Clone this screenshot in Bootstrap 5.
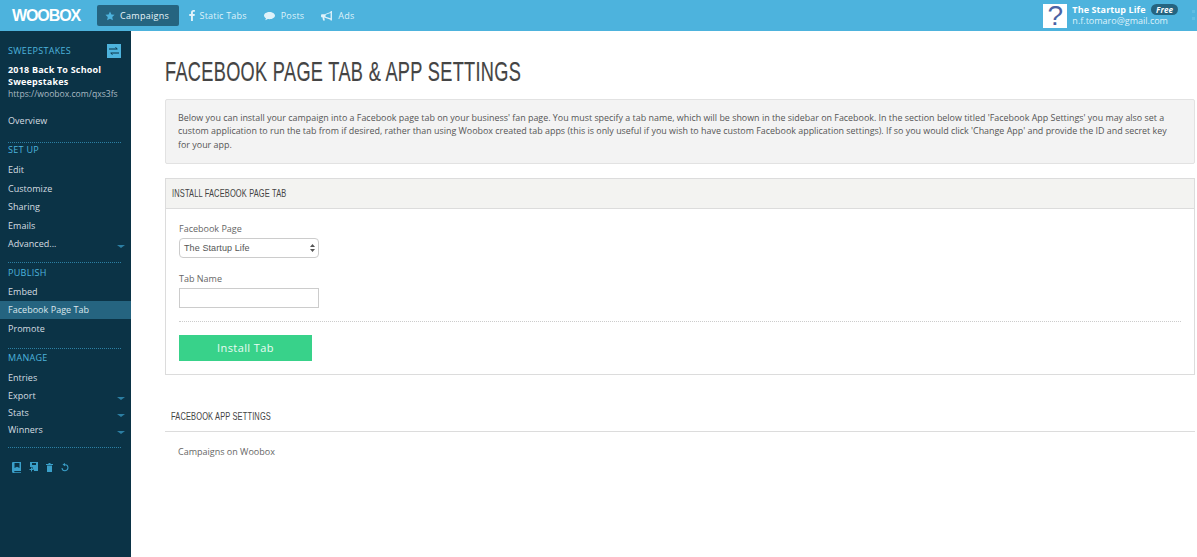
<!DOCTYPE html>
<html lang="en">
<head>
    <meta charset="UTF-8">
    <title>Woobox</title>
    <link href="https://cdn.jsdelivr.net/npm/bootstrap@5.3.3/dist/css/bootstrap.min.css" rel="stylesheet">
    <script src="https://cdn.jsdelivr.net/npm/bootstrap@5.3.3/dist/js/bootstrap.bundle.min.js"></script>
    <style>
        html, body { height: 557px; overflow: hidden; }
        body { font-family: "Open Sans", sans-serif; font-size: 9px; color: #555; background: #fff; }
        .top-bar { height: 31px; background: #4db3dd; padding-left: 12px; position: relative; }
        .logo-text { font-family: "Liberation Sans", sans-serif; font-weight: 700; font-size: 16px; line-height: 16px; letter-spacing: -1.1px; color: #fff; width: 85px; }
        .top-link { height: 21px; padding: 0 8.5px; color: #dff2fa; font-size: 9px; letter-spacing: .2px; border-radius: 2px; gap: 5px; }
        .top-link svg { fill: #dff2fa; }
        .top-link.on { background: #256480; color: #e8f4f9; width: 82px; padding: 0 8px; gap: 5px; letter-spacing: .3px; margin-right: 1px; }
        .top-link.on svg { fill: #4db3dd; }
        .link-gap-wide { gap: 6px; }
        .acct { padding-right: 19px; color: #fff; line-height: 11px; font-size: 9px; }
        .acct-pic { width: 24px; height: 24px; background: #fff; margin-right: 5px; color: #4a63a5; font-size: 28px; line-height: 24px; text-align: center; font-family: "Liberation Sans", sans-serif; }
        .acct-text { padding-bottom: 2px; }
        .acct-name { letter-spacing: .1px; }
        .plan { background: #256480; border-radius: 6px; font-style: italic; font-weight: 700; font-size: 8px; line-height: 9px; padding: 0 5px; margin-left: 3px; }
        .acct-mail { color: #dff2fa; }
        .grip { position: absolute; right: 2px; top: 10px; width: 3px; height: 10px; border-left: 3px dotted #5fbde3; }
        .side { width: 131px; height: 526px; background: #0b3346; color: #d5dde1; padding-top: 13px; flex: none; }
        .side-in { margin: 0 10px 0 8px; }
        .side-head { color: #4db3dd; font-size: 9px; letter-spacing: .3px; line-height: 12px; margin-bottom: 3.5px; }
        .swap-btn { width: 14px; height: 14px; background: #4db3dd; }
        .camp-name { color: #fff; font-weight: 700; line-height: 11.5px; margin-top: 6px; font-size: 9px; letter-spacing: .2px; }
        .camp-url { color: #a9bac3; font-size: 8.6px; line-height: 12px; margin-top: 1px; }
        .side-link { display: flex; align-items: center; justify-content: space-between; height: 18.5px; padding: 0 8px; color: #d5dde1; font-size: 9px; letter-spacing: .03px; }
        .side-link.on { background: #256480; color: #dbe7ec; }
        .side-link.tight { height: 17px; }
        .overview-link { margin-top: 11px; }
        .side-rule { border-top: 1px dotted #2c7fa3; margin: 9px 10px 0 8px; padding-top: 3.5px; }
        .rule-first { margin-top: 12px; padding-top: 1.5px; }
        .rule-first .side-head { margin-bottom: 4.5px; }
        .rule-mid { margin-top: 10px; }
        .rule-mid .side-head { margin-bottom: 4.5px; }
        .rule-last { margin-top: 9px; }
        .side-arrow { width: 0; height: 0; border-left: 4px solid transparent; border-right: 4px solid transparent; border-top: 3px solid #2c7fa3; margin-right: -2px; margin-top: 5px; }
        .tool-row { margin: 10px 0 0 12px; gap: 8px; }
        .tool-row svg { fill: #3a9fc9; }
        .page-body { padding: 22px 2px 0 34px; min-width: 0; }
        .squeeze { display: inline-block; white-space: nowrap; transform: scaleX(.68); transform-origin: left center; font-family: "Liberation Sans", sans-serif; }
        .page-title { font-size: 27.5px; line-height: 36px; color: #444; font-weight: 400; margin: 0 0 9px; }
        .page-title .squeeze { transform: scaleX(.66); letter-spacing: .5px; -webkit-text-stroke: .2px #444; }
        .note-box { background: #f3f3f3; border: 1px solid #e2e2e2; border-radius: 2px; padding: 11px 8px 11px 12px; line-height: 13.3px; height: 65px; font-size: 8.92px; color: #555; margin-bottom: 14px; }
        .set-box { border: 1px solid #dcdcdc; height: 197px; margin-bottom: 33px; }
        .set-head { background: #f3f3f1; border-bottom: 1px solid #dcdcdc; height: 30px; padding: 0 6px; font-size: 11px; color: #444; display: flex; align-items: center; letter-spacing: .2px; }
        .set-body { padding: 14px 13px 0 13px; }
        .fld-label { display: block; font-size: 9px; line-height: 12px; margin-bottom: 3px; color: #666; }
        .fld-select { width: 140px; height: 20px; border: 1px solid #ccc; border-radius: 4px; padding: 0 4px; font-size: 9px; color: #555; font-family: "Liberation Sans", sans-serif; margin-bottom: 15px; line-height: 18px; letter-spacing: .1px; position: relative; }
        .fld-select svg { position: absolute; right: 3px; top: 4px; }
        .fld-input { display: block; width: 140px; height: 20px; border: 1px solid #ccc; padding: 0; background: #fff; }
        .dot-rule { border-top: 1px dotted #ccc; margin: 13px 0; }
        .install-btn { width: 133px; height: 26px; background: #38d28a; color: #eafbf3; border: 0; border-radius: 0; font-size: 11px; padding: 0; letter-spacing: .4px; }
        .app-head { font-size: 11px; color: #444; border-bottom: 1px solid #dcdcdc; height: 24px; padding-left: 6px; letter-spacing: .2px; }
        .app-text { padding: 13px; font-size: 9px; color: #666; }
    </style>
</head>
<body>
    <nav class="top-bar d-flex align-items-center">
        <div class="logo-text">WOOBOX</div>
        <a class="top-link on d-flex align-items-center text-decoration-none">
            <svg width="10" height="10" viewBox="0 0 24 24"><path d="M12 1l3.400 7.200 7.600 1-5.600 5.300 1.500 7.800L12 18.500l-6.900 3.800 1.500-7.800L1 9.200l7.600-1z"/></svg>
            Campaigns
        </a>
        <a class="top-link d-flex align-items-center text-decoration-none">
            <svg width="6" height="11" viewBox="0 0 12 24"><path d="M8 24V13h3.600l.6-4.400H8V6c0-1.300.4-2.100 2.200-2.100h2.100V.2C11.900.1 10.600 0 9.200 0 6 0 3.800 2 3.800 5.500v3.100H0V13h3.800v11z"/></svg>
            Static Tabs
        </a>
        <a class="top-link link-gap-wide d-flex align-items-center text-decoration-none">
            <svg width="11" height="10" viewBox="0 0 24 20"><path d="M12 1C5.400 1 0 4.600 0 9c0 2.500 1.700 4.700 4.400 6.200-.4 1.500-1.300 2.800-2.400 3.800 2.300 0 4.500-.8 6.200-2.200 1.200.2 2.500.3 3.800.3 6.600 0 12-3.600 12-8S18.600 1 12 1z"/></svg>
            Posts
        </a>
        <a class="top-link link-gap-wide d-flex align-items-center text-decoration-none">
            <svg width="11" height="10" viewBox="0 0 24 22"><path d="M21 0v2L8 7H2a2 2 0 0 0-2 2v3a2 2 0 0 0 2 2h1l1.500 7h4L7 14.300 21 19v2h3V0zm0 4.500v11.700L10 12.500V8.200z"/></svg>
            Ads
        </a>
        <div class="acct d-flex align-items-center ms-auto">
            <div class="acct-pic">?</div>
            <div class="acct-text">
                <div class="fw-bold acct-name">The Startup Life <span class="plan">Free</span></div>
                <div class="acct-mail">n.f.tomaro@gmail.com</div>
            </div>
        </div>
        <span class="grip"></span>
    </nav>

    <div class="d-flex">
        <aside class="side">
            <div class="side-in">
                <div class="d-flex justify-content-between align-items-center">
                    <span class="side-head mb-0">SWEEPSTAKES</span>
                    <span class="swap-btn d-flex align-items-center justify-content-center">
                        <svg width="10" height="8" viewBox="0 0 10 8"><path d="M0 2h8M6.500.5L8.500 2M10 6H2M3.500 7.500L1.500 6" stroke="#0b3346" fill="none"/></svg>
                    </span>
                </div>
                <div class="camp-name">2018 Back To School Sweepstakes</div>
                <div class="camp-url">https://woobox.com/qxs3fs</div>
            </div>
            <div class="side-link overview-link">Overview</div>
            <div class="side-rule rule-first"><div class="side-head">SET UP</div></div>
            <div class="side-link">Edit</div>
            <div class="side-link">Customize</div>
            <div class="side-link">Sharing</div>
            <div class="side-link">Emails</div>
            <div class="side-link">Advanced...<span class="side-arrow"></span></div>
            <div class="side-rule"><div class="side-head">PUBLISH</div></div>
            <div class="side-link">Embed</div>
            <div class="side-link on">Facebook Page Tab</div>
            <div class="side-link">Promote</div>
            <div class="side-rule rule-mid"><div class="side-head">MANAGE</div></div>
            <div class="side-link">Entries</div>
            <div class="side-link tight">Export<span class="side-arrow"></span></div>
            <div class="side-link tight">Stats<span class="side-arrow"></span></div>
            <div class="side-link tight">Winners<span class="side-arrow"></span></div>
            <div class="side-rule rule-last"></div>
            <div class="tool-row d-flex align-items-center">
                <svg width="9" height="11" viewBox="0 0 9 11"><path fill-rule="evenodd" d="M1 0h8v9H2.500a.8.8 0 0 0 0 1.200H9v.8H1.500A1.500 1.500 0 0 1 0 9.500V1a1 1 0 0 1 1-1zM2.500 1v5L5 4.800 7.500 6V1z"/></svg>
                <svg width="9" height="10" viewBox="0 0 9 10"><path fill-rule="evenodd" d="M1 0h8v9H5V7.500H3.500V5H1zM3 1v2h4V1z"/><path d="M2 5.500h1v1.500h1.500v1H3V9.500H2V8H.5V7H2z"/></svg>
                <svg width="7" height="9" viewBox="0 0 7 9"><path d="M0 1h7v1H0zM1 2.500h5V9H1zM2.500 0h2v1h-2z"/></svg>
                <svg width="8" height="9" viewBox="0 0 8 9"><path d="M1.500 1.500L4 0v1.200a3.500 3.500 0 1 1-3.500 3.800h1A2.500 2.500 0 1 0 4 2.200V3.300z"/></svg>
            </div>
        </aside>

        <main class="page-body flex-grow-1">
            <h1 class="page-title"><span class="squeeze">FACEBOOK PAGE TAB &amp; APP SETTINGS</span></h1>
            <div class="note-box">Below you can install your campaign into a Facebook page tab on your business' fan page. You must specify a tab name, which will be shown in the sidebar on Facebook. In the section below titled 'Facebook App Settings' you may also set a custom application to run the tab from if desired, rather than using Woobox created tab apps (this is only useful if you wish to have custom Facebook application settings). If so you would click 'Change App' and provide the ID and secret key<br>for your app.</div>
            <section class="set-box">
                <div class="set-head"><span class="squeeze">INSTALL FACEBOOK PAGE TAB</span></div>
                <div class="set-body">
                    <label class="fld-label">Facebook Page</label>
                    <div class="fld-select">The Startup Life
                        <svg width="5" height="10" viewBox="0 0 5 10"><path d="M2.500 1L5 4H0zM2.500 9L0 6h5z" fill="#555"/></svg>
                    </div>
                    <label class="fld-label">Tab Name</label>
                    <input class="fld-input" type="text">
                    <div class="dot-rule"></div>
                    <button class="btn install-btn" type="button">Install Tab</button>
                </div>
            </section>
            <div class="app-head"><span class="squeeze">FACEBOOK APP SETTINGS</span></div>
            <div class="app-text">Campaigns on Woobox</div>
        </main>
    </div>
</body>
</html>
